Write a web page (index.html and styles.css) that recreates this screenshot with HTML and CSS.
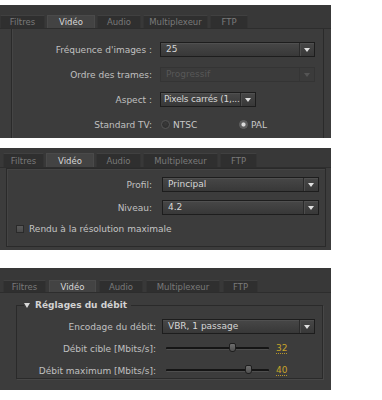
FILE: index.html
```html
<!DOCTYPE html>
<html>
<head>
<meta charset="UTF-8">
<title>Exportation - Vidéo</title>
<link rel="stylesheet" href="styles.css">
</head>
<body>

<!-- panneau 1 : format vidéo -->
<div class="panel p1">
  <div class="tabs">
    <div class="tab">Filtres</div>
    <div class="tab active">Vidéo</div>
    <div class="tab">Audio</div>
    <div class="tab">Multiplexeur</div>
    <div class="tab">FTP</div>
  </div>
  <div class="body">
    <div class="frame">
      <div class="row">
        <span class="lbl">Fréquence d'images :</span>
        <div class="select wide"><span class="val">25</span><span class="drop"><i></i></span></div>
      </div>
      <div class="row">
        <span class="lbl">Ordre des trames:</span>
        <div class="select wide disabled"><span class="val">Progressif</span><span class="drop"><i></i></span></div>
      </div>
      <div class="row">
        <span class="lbl">Aspect :</span>
        <div class="select aspect"><span class="val">Pixels carrés (1,...</span><span class="drop"><i></i></span></div>
      </div>
      <div class="row">
        <span class="lbl">Standard TV:</span>
        <div class="radios">
          <span class="opt first"><span class="radio"></span>NTSC</span>
          <span class="opt"><span class="radio on"></span>PAL</span>
        </div>
      </div>
    </div>
  </div>
</div>

<!-- panneau 2 : profil / niveau -->
<div class="panel p2">
  <div class="tabs">
    <div class="tab">Filtres</div>
    <div class="tab active">Vidéo</div>
    <div class="tab">Audio</div>
    <div class="tab">Multiplexeur</div>
    <div class="tab">FTP</div>
  </div>
  <div class="body">
    <div class="box">
      <div class="row">
        <span class="lbl">Profil:</span>
        <div class="select"><span class="val">Principal</span><span class="drop"><i></i></span></div>
      </div>
      <div class="row">
        <span class="lbl">Niveau:</span>
        <div class="select"><span class="val">4.2</span><span class="drop"><i></i></span></div>
      </div>
      <label class="check"><span class="checkbox"></span>Rendu à la résolution maximale</label>
    </div>
  </div>
</div>

<!-- panneau 3 : débit -->
<div class="panel p3">
  <div class="tabs">
    <div class="tab">Filtres</div>
    <div class="tab active">Vidéo</div>
    <div class="tab">Audio</div>
    <div class="tab">Multiplexeur</div>
    <div class="tab">FTP</div>
  </div>
  <div class="body">
    <fieldset class="group">
      <legend><i class="twisty"></i>Réglages du débit</legend>
      <div class="row">
        <span class="lbl">Encodage du débit:</span>
        <div class="select"><span class="val">VBR, 1 passage</span><span class="drop"><i></i></span></div>
      </div>
      <div class="row">
        <span class="lbl">Débit cible [Mbits/s]:</span>
        <div class="slider"><span class="thumb" style="left:64%"></span></div>
        <span class="num">32</span>
      </div>
      <div class="row">
        <span class="lbl">Débit maximum [Mbits/s]:</span>
        <div class="slider"><span class="thumb" style="left:80%"></span></div>
        <span class="num">40</span>
      </div>
    </fieldset>
  </div>
</div>

</body>
</html>
```

FILE: styles.css
```css
* {
  margin: 0;
  padding: 0;
  box-sizing: border-box;
}

body {
  background: #fff;
  font-family: "DejaVu Sans", Verdana, sans-serif;
  font-size: 9px;
  color: #c0c0c0;
}

/* ---- panneaux ---- */
.panel {
  width: 331px;
  background: #383838;
  display: flex;
  flex-direction: column;
  overflow: hidden;
}

.p1 {
  margin-top: 5px;
  height: 133px;
  padding-top: 10px;
}

.p2 {
  margin-top: 10px;
  height: 102px;
  padding-top: 5px;
}

.p3 {
  margin-top: 18px;
  height: 122px;
  padding-top: 12px;
}

/* ---- onglets ---- */
.tabs {
  display: grid;
  gap: 2px;
  height: 13px;
}

.p1 .tabs {
  grid-template-columns: 45px 48px 44px 65px 38px;
}

.p2 .tabs {
  height: 14px;
  margin-left: 3px;
  grid-template-columns: 41px 48px 45px 75px 37px;
}

.p3 .tabs {
  height: 12px;
  margin-left: 3px;
  gap: 3px;
  grid-template-columns: 43px 47px 44px 74px 35px;
}

.tab {
  background: #2f2f2f;
  border: 1px solid #343434;
  border-top-color: #404040;
  border-bottom: none;
  color: #7a7a7a;
  font-size: 8.5px;
  display: flex;
  align-items: center;
  justify-content: center;
  white-space: nowrap;
}

.tab.active {
  background: #434343;
  border-color: #4a4a4a;
  color: #d8d8d8;
}

.body {
  flex: 1;
  background: #3c3c3c;
  border-top: 1px solid #2d2d2d;
  display: flex;
  flex-direction: column;
}

/* ---- cadres ---- */
.frame {
  flex: 1;
  margin: 0 7px 0 11px;
  border-left: 1px solid #2a2a2a;
  border-right: 1px solid #2a2a2a;
  box-shadow: inset 1px 0 0 #454545;
  padding-top: 13px;
  display: flex;
  flex-direction: column;
  gap: 10px;
}

.box {
  flex: 1;
  margin: 0 5px 3px 6px;
  border: 1px solid #2a2a2a;
  box-shadow: inset 1px 1px 0 #444;
  padding-top: 8px;
  display: flex;
  flex-direction: column;
  gap: 8px;
}

.group {
  margin: 7px 8px 6px 16px;
  border: 1px solid #2a2a2a;
  box-shadow: 1px 1px 0 #474747;
  padding: 8px 0 0;
  display: flex;
  flex-direction: column;
  gap: 7px;
}

.group legend {
  margin-left: 7px;
  padding-right: 4px;
  line-height: 11px;
  font-weight: bold;
  color: #d2d2d2;
  display: flex;
  align-items: center;
}

.twisty {
  width: 0;
  height: 0;
  border-left: 3px solid transparent;
  border-right: 3px solid transparent;
  border-top: 5px solid #d8d8d8;
  margin-right: 5px;
}

/* ---- lignes ---- */
.row {
  display: flex;
  align-items: center;
  height: 15px;
}

.lbl {
  text-align: right;
  white-space: nowrap;
  flex: none;
}

.frame .lbl {
  width: 140px;
  margin-right: 8px;
}

.box .lbl {
  width: 145px;
  margin-right: 10px;
}

.group .lbl {
  width: 139px;
  margin-right: 6px;
}

/* ---- listes déroulantes ---- */
.select {
  height: 15px;
  width: 157px;
  display: flex;
  border: 1px solid #1d1d1d;
  background: linear-gradient(#474747, #383838);
  box-shadow: inset 0 1px 0 #505050;
  color: #d6d6d6;
}

.frame .select.wide {
  width: 155px;
}

.frame .select.aspect {
  width: 96px;
}

.group .select {
  width: 153px;
}

.select .val {
  flex: 1;
  padding-left: 5px;
  line-height: 13px;
  white-space: nowrap;
  overflow: hidden;
}

.select.aspect .val {
  padding-left: 3px;
  letter-spacing: -0.2px;
}

.select .drop {
  width: 15px;
  flex: none;
  border-left: 1px solid #2a2a2a;
  box-shadow: inset 1px 0 0 #4d4d4d;
  display: flex;
  align-items: center;
  justify-content: center;
}

.select .drop i {
  width: 0;
  height: 0;
  border-left: 3px solid transparent;
  border-right: 3px solid transparent;
  border-top: 4px solid #e0e0e0;
}

.select.disabled {
  border-color: #343434;
  background: #3b3b3b;
  box-shadow: none;
  color: #585858;
}

.select.disabled .drop {
  border-left-color: #353535;
  box-shadow: none;
}

.select.disabled .drop i {
  border-top-color: #555;
}

/* ---- boutons radio / case ---- */
.radios {
  display: flex;
  align-items: center;
  padding-left: 1px;
}

.opt {
  display: flex;
  align-items: center;
  gap: 3px;
  color: #c8c8c8;
}

.opt.first {
  width: 78px;
}

.radio {
  width: 9px;
  height: 9px;
  border-radius: 50%;
  border: 1px solid #555;
  background: radial-gradient(circle at 50% 40%, #3a3a3a, #2a2a2a);
}

.radio.on {
  border-color: #666;
  background: radial-gradient(circle, #dcdcdc 0 1.6px, #6a6a6a 2.4px, #4a4a4a 4px);
}

.check {
  display: flex;
  align-items: center;
  gap: 5px;
  margin: 1px 0 0 9px;
  color: #c4c4c4;
}

.checkbox {
  width: 8px;
  height: 8px;
  border: 1px solid #2a2a2a;
  background: linear-gradient(#5a5a5a, #4a4a4a);
}

/* ---- curseurs ---- */
.slider {
  position: relative;
  width: 103px;
  height: 3px;
  margin-left: 4px;
  background: #151515;
  border-bottom: 1px solid #4e4e4e;
  border-radius: 1px;
}

.thumb {
  position: absolute;
  top: -4px;
  width: 7px;
  height: 9px;
  margin-left: -3px;
  border: 1px solid #1e1e1e;
  border-radius: 2px 2px 3px 3px;
  background: linear-gradient(#6e6e6e, #4f4f4f);
}

.num {
  margin-left: 7px;
  color: #c9a42a;
  border-bottom: 1px dotted #b8962a;
  line-height: 9px;
}
```
